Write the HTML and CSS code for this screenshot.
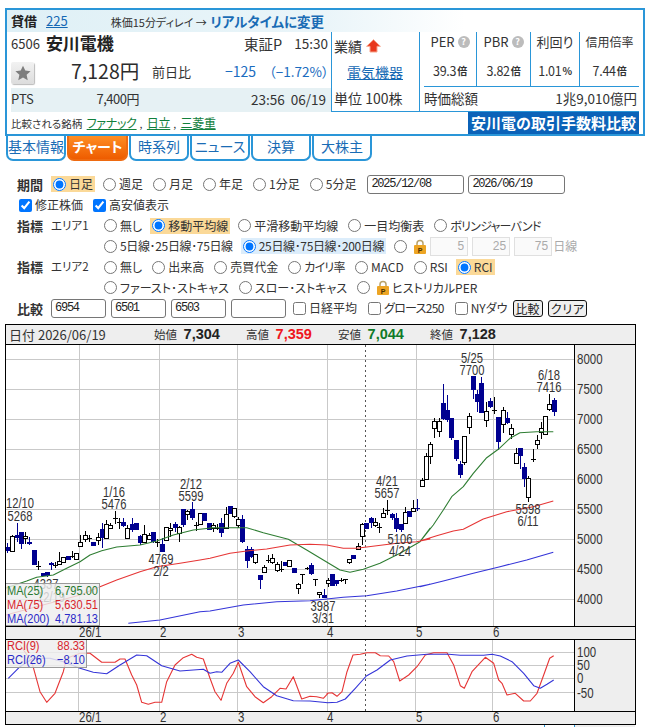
FILE: index.html
```html
<!DOCTYPE html>
<html lang="ja">
<head>
<meta charset="utf-8">
<title>安川電機 チャート</title>
<link rel="stylesheet" href="styles.css">
</head>
<body>
<div class="page">
  <section class="quote">
    <div class="q-top">
      <b class="q-margin">貸借</b><a class="q-nk" href="#">225</a>
      <span class="q-delay">株価15分ディレイ → <b>リアルタイムに変更</b></span>
    </div>
    <div class="q-main">
      <div class="q-left">
        <div class="q-name">
          <span class="code">6506</span><b class="name">安川電機</b>
          <span class="market">東証P</span><span class="time">15:30</span>
        </div>
        <div class="q-price">
          <button class="star" type="button" aria-label="登録"><svg width="16" height="16" viewBox="0 0 24 24"><path class="star-shape" d="M12 1l3.4 7.4 8 .9-6 5.4 1.7 8L12 18.700l-7.100 4 1.700-8-6-5.400 8-.9z"/></svg></button>
          <span class="price">7,128円</span>
          <span class="zenjitsu">前日比</span>
          <span class="chg">−125</span><span class="pct">（−1.72%）</span>
        </div>
        <div class="q-pts">
          <span class="pts">PTS</span><span class="pts-price">7,400円</span><span class="pts-time">23:56&nbsp; 06/19</span>
        </div>
      </div>
      <div class="q-mid">
        <div class="mid-row">業績 <svg class="up" width="15" height="14" viewBox="0 0 15 14"><path class="up-shape" d="M7.500 .7L14.400 7.300H11V13H4V7.300H.6z"/></svg></div>
        <div class="mid-row mid-link"><a href="#">電気機器</a></div>
        <div class="mid-row mid-unit">単位 100株</div>
      </div>
      <div class="q-right">
        <div class="metrics">
          <div class="m-cell">PER <span class="help">?</span></div>
          <div class="m-cell">PBR <span class="help">?</span></div>
          <div class="m-cell">利回り</div>
          <div class="m-cell m-small">信用倍率</div>
          <div class="m-cell m-val">39.3<small>倍</small></div>
          <div class="m-cell m-val">3.82<small>倍</small></div>
          <div class="m-cell m-val">1.01 <small>%</small></div>
          <div class="m-cell m-val">7.44<small>倍</small></div>
        </div>
        <div class="cap"><span>時価総額</span><span>1兆9,010億円</span></div>
      </div>
    </div>
    <div class="q-foot">
      <div class="peers">比較される銘柄 <a href="#">ファナック</a>, <a href="#">日立</a>, <a href="#">三菱重</a></div>
      <div class="banner">安川電の取引手数料比較</div>
    </div>
  </section>

  <nav class="tabs">
    <a class="tab" href="#">基本情報</a>
    <a class="tab tab-on" href="#">チャート</a>
    <a class="tab" href="#">時系列</a>
    <a class="tab" href="#">ニュース</a>
    <a class="tab" href="#">決算</a>
    <a class="tab" href="#">大株主</a>
  </nav>

  <form class="form">
    <div class="row">
      <b class="lab">期間</b>
      <label class="opt hl"><input type="radio" name="p" checked>日足</label>
      <label class="opt"><input type="radio" name="p">週足</label>
      <label class="opt"><input type="radio" name="p">月足</label>
      <label class="opt"><input type="radio" name="p">年足</label>
      <label class="opt"><input type="radio" name="p">1分足</label>
      <label class="opt"><input type="radio" name="p">5分足</label>
      <input class="date" type="text" value="2025/12/08">
      <input class="date date2" type="text" value="2026/06/19">
    </div>
    <div class="row row-checks">
      <label class="opt"><input type="checkbox" checked>修正株価</label>
      <label class="opt"><input type="checkbox" checked>高安値表示</label>
    </div>
    <div class="row">
      <b class="lab">指標</b><span class="area">エリア1</span>
      <label class="opt"><input type="radio" name="a1">無し</label>
      <label class="opt hl"><input type="radio" name="a1" checked>移動平均線</label>
      <label class="opt"><input type="radio" name="a1">平滑移動平均線</label>
      <label class="opt"><input type="radio" name="a1">一目均衡表</label>
      <label class="opt tight"><input type="radio" name="a1">ボリンジャーバンド</label>
    </div>
    <div class="row row-sub">
      <label class="opt tight-s"><input type="radio" name="ma">5日線･25日線･75日線</label>
      <label class="opt hl-blue tight-s"><input type="radio" name="ma" checked>25日線･75日線･200日線</label>
      <label class="opt"><input type="radio" name="ma"><svg class="lock" width="12" height="15" viewBox="0 0 12 15"><path class="lock-bow" d="M3 7V4.500a3 3 0 0 1 6 0V7"/><rect class="lock-body" y="6" width="12" height="9" rx="1"/><text class="lock-p" x="6" y="13.500">P</text></svg></label>
      <input class="ma-in" type="text" value="5" disabled>
      <input class="ma-in" type="text" value="25" disabled>
      <input class="ma-in" type="text" value="75" disabled>
      <span class="ma-unit">日線</span>
    </div>
    <div class="row">
      <b class="lab">指標</b><span class="area">エリア2</span>
      <label class="opt"><input type="radio" name="a2">無し</label>
      <label class="opt"><input type="radio" name="a2">出来高</label>
      <label class="opt"><input type="radio" name="a2">売買代金</label>
      <label class="opt tight"><input type="radio" name="a2">カイリ率</label>
      <label class="opt"><input type="radio" name="a2">MACD</label>
      <label class="opt"><input type="radio" name="a2">RSI</label>
      <label class="opt hl"><input type="radio" name="a2" checked>RCI</label>
    </div>
    <div class="row row-sub">
      <label class="opt"><input type="radio" name="a2">ファースト･ストキャス</label>
      <label class="opt"><input type="radio" name="a2">スロー･ストキャス</label>
      <label class="opt"><input type="radio" name="a2"><svg class="lock" width="12" height="15" viewBox="0 0 12 15"><path class="lock-bow" d="M3 7V4.500a3 3 0 0 1 6 0V7"/><rect class="lock-body" y="6" width="12" height="9" rx="1"/><text class="lock-p" x="6" y="13.500">P</text></svg>ヒストリカルPER</label>
    </div>
    <div class="row row-cmp">
      <b class="lab">比較</b>
      <input class="cmp" type="text" value="6954">
      <input class="cmp" type="text" value="6501">
      <input class="cmp" type="text" value="6503">
      <input class="cmp" type="text" value="">
      <label class="opt"><input type="checkbox">日経平均</label>
      <label class="opt tight"><input type="checkbox">グロース250</label>
      <label class="opt"><input type="checkbox">NYダウ</label>
      <button class="btn" type="button">比較</button>
      <button class="btn tight" type="button">クリア</button>
    </div>
  </form>

  <section class="chart">
    <div class="ohlc">
      <span class="o-date">日付 2026/06/19</span>
      <span class="o-item o-open"><i>始値</i> <b>7,304</b></span>
      <span class="o-item"><i>高値</i> <b class="red">7,359</b></span>
      <span class="o-item"><i>安値</i> <b class="green">7,044</b></span>
      <span class="o-item"><i>終値</i> <b>7,128</b></span>
    </div>
    <svg id="plot" class="plot" width="631" height="382" viewBox="5 345 631 382">
      <rect class="panel" x="575" y="345" width="60" height="281"/>
      <rect class="panel" x="5" y="627" width="630" height="12"/>
      <rect class="panel" x="5" y="712" width="630" height="12"/>
      <rect class="panel" x="575" y="640" width="60" height="71"/>
      <rect class="panel" x="575" y="725" width="60" height="2"/>
      <path class="grid" d="M5 359.500H574M5 389.500H574M5 419.500H574M5 449.500H574M5 479.500H574M5 509.500H574M5 539.500H574M5 569.500H574M5 599.500H574M79.500 345V626M159.500 345V626M237.500 345V626M327.500 345V626M416.500 345V626M493.500 345V626"/>
      <path class="grid" d="M5 652.500H574M5 665.500H574M5 678.500H574M5 692.500H574M78.500 639V711M159.500 639V711M237.500 639V711M327.500 639V711M415.500 639V711M492.500 639V711"/>
      <path class="dots" d="M365.500 345V626M365.500 639V711"/>
      <g id="candles"></g>
      <g id="lines"></g>
      <g class="lbl">
        <text x="20" y="508">12/10</text><text x="20" y="521">5268</text>
        <text x="114" y="497">1/16</text><text x="114" y="509">5476</text>
        <text x="191" y="489">2/12</text><text x="191" y="501">5599</text>
        <text x="161" y="564">4769</text><text x="161" y="576">2/2</text>
        <text x="46" y="589">4337</text><text x="51" y="602">12/19</text>
        <text x="323" y="611">3987</text><text x="323" y="623">3/31</text>
        <text x="387" y="486">4/21</text><text x="387" y="498">5657</text>
        <text x="400" y="544">5106</text><text x="400" y="556">4/24</text>
        <text x="472" y="363">5/25</text><text x="472" y="375">7700</text>
        <text x="549" y="380">6/18</text><text x="549" y="392">7416</text>
        <text x="528" y="514">5598</text><text x="528" y="526">6/11</text>
      </g>
      <g class="axis">
        <text x="577" y="364">8000</text><text x="577" y="394">7500</text><text x="577" y="424">7000</text>
        <text x="577" y="454">6500</text><text x="577" y="484">6000</text><text x="577" y="514">5500</text>
        <text x="577" y="544">5000</text><text x="577" y="574">4500</text><text x="577" y="604">4000</text>
        <text x="577" y="657">100</text><text x="577" y="670">50</text><text x="577" y="683">0</text><text x="577" y="698">-50</text>
        <text x="79" y="637">26/1</text><text x="160" y="637">2</text><text x="238" y="637">3</text><text x="327" y="637">4</text><text x="416" y="637">5</text><text x="493" y="637">6</text>
        <text x="79" y="722">26/1</text><text x="160" y="722">2</text><text x="238" y="722">3</text><text x="327" y="722">4</text><text x="416" y="722">5</text><text x="493" y="722">6</text>
      </g>
      <rect class="legend" x="5.500" y="583.500" width="94" height="42"/>
      <g class="leg-t">
        <text class="c-g" x="7" y="595">MA(25)</text><text class="c-g end" x="98" y="595">6,795.00</text>
        <text class="c-r" x="7" y="609">MA(75)</text><text class="c-r end" x="98" y="609">5,630.51</text>
        <text class="c-b" x="7" y="623">MA(200)</text><text class="c-b end" x="98" y="623">4,781.13</text>
      </g>
      <rect class="legend" x="5.500" y="639.500" width="81" height="28"/>
      <g class="leg-t">
        <text class="c-r" x="7" y="650">RCI(9)</text><text class="c-r end" x="85" y="650">88.33</text>
        <text class="c-b" x="7" y="664">RCI(26)</text><text class="c-b end" x="85" y="664">−8.10</text>
      </g>
      <path class="frame" d="M5.500 345V724M635.500 345V724M574.500 345V626M574.500 639V711M5 626.500H636M5 639.500H636M5 711.500H636M5 724.500H636"/>
      <path class="tick" d="M544.500 725V727M574.500 725V727"/>
    </svg>
  </section>
</div>
<script src="chart.js"></script>
</body>
</html>
```

FILE: styles.css
```css
* { box-sizing: border-box; }
html, body { margin: 0; padding: 0; background: #fff; }
body {
  font-family: "Noto Sans CJK JP", "Noto Sans", sans-serif;
  font-size: 12px;
  line-height: 1.2;
  color: #333;
  font-feature-settings: "palt";
  overflow: hidden;
}
.page { width: 657px; height: 727px; padding: 8px 0 0 5px; overflow: hidden; }
a { color: #1468b4; }

/* quote box */
.quote { width: 640px; height: 128px; border: 2px solid #2a96d8; padding: 0 4px 0 4px; background: #fff; position: relative; z-index: 1; }
.q-top { height: 22px; margin: 0 -4px; padding: 0 0 0 4px; display: flex; align-items: center; background: linear-gradient(90deg, #dff0f6, #eaf5f9 50%, #fff 72%); }
.q-margin { font-size: 13px; color: #222; font-weight: 700; }
.q-nk { font-size: 13px; margin-left: 9px; }
.q-delay { margin-left: 43px; font-size: 11px; }
.q-delay b { font-size: 13.500px; color: #1a6cb5; margin-left: 1px; }
.q-main { display: flex; height: 80px; border-bottom: 1px solid #2a96d8; }
.q-left { width: 320px; }
.q-name { height: 28px; padding-bottom: 5px; display: flex; align-items: center; }
.code { font-size: 13px; }
.name { font-size: 17px; margin-left: 6px; color: #222; }
.market { font-size: 14.500px; margin-left: auto; }
.time { font-size: 13.500px; margin-left: 12px; margin-right: 3px; }
.q-price { height: 28px; display: flex; align-items: center; }
.star { width: 23px; height: 22px; padding: 0; border: 0; border-radius: 2px; background: linear-gradient(#f2f2f2, #dcdcdc); box-shadow: 1px 1px 1px #bbb; display: flex; align-items: center; justify-content: center; margin-top: -2px; }
.star-shape { fill: #7d7d7d; }
.price { font-size: 19.500px; margin-left: 37px; width: 81px; color: #2c2c2c; padding-bottom: 6px; }
.zenjitsu { font-size: 13px; padding-bottom: 5px; }
.chg { font-size: 14px; color: #1a6cc0; margin-left: 34px; padding-bottom: 5px; }
.pct { font-size: 13.500px; margin-left: 13px; color: #1a6cc0; padding-bottom: 5px; }
.q-pts { height: 24px; background: #e6f1f4; display: flex; align-items: center; font-size: 13px; padding-bottom: 2px; }
.pts { width: 59px; }
.pts-price { width: 69px; text-align: right; letter-spacing: -.5px; }
.pts-time { margin-left: auto; margin-right: 5px; font-size: 13.500px; }
.q-mid { width: 89px; border-left: 1px solid #2a96d8; border-right: 1px solid #2a96d8; padding-left: 2px; }
.mid-row { height: 28px; display: flex; align-items: center; font-size: 14px; gap: 4px; }
.mid-link { justify-content: center; padding: 0 3px 3px 0; }
.mid-unit { height: 24px; font-size: 14px; padding-bottom: 3px; }
.up { display: block; }
.up-shape { fill: #e8381c; stroke: #f7a58c; stroke-width: 1; }
.q-right { width: 219px; padding-left: 4px; }
.metrics { display: grid; grid-template-columns: 52px 54px 49px 60px; grid-template-rows: 28px 27px; border-bottom: 1px solid #2a96d8; height: 55px; }
.m-cell { display: flex; align-items: center; justify-content: center; gap: 3px; font-size: 13px; border-left: 1px solid #2a96d8; padding-bottom: 8px; }
.m-small { font-size: 12px; }
.m-cell:nth-child(4n+1) { border-left: 0; }
.m-val { gap: 0; font-size: 12.500px; letter-spacing: -.3px; padding-bottom: 6px; }
.m-val small { font-size: 10px; margin-left: 1px; font-weight: 700; }
.help { width: 12px; height: 12px; border-radius: 50%; background: #bcbcbc; color: #fff; font-size: 9px; font-weight: 700; line-height: 12px; text-align: center; }
.cap { height: 24px; display: flex; justify-content: space-between; align-items: center; font-size: 13.500px; padding: 0 2px 2px 0; }
.q-foot { height: 22px; display: flex; align-items: center; justify-content: space-between; }
.peers { font-size: 10.500px; }
.peers a { font-size: 12px; color: #12803c; margin: 0 3px 0 2px; letter-spacing: -.3px; }
.banner { width: 171px; height: 22px; background: #0b62b8; color: #fff; font-size: 15px; font-weight: 700; line-height: 22px; text-align: center; white-space: nowrap; }

/* tabs */
.tabs { display: flex; gap: 1px; margin: -1px 0 0 1px; height: 26px; align-items: stretch; }
.tab { width: 60px; border: 2px solid #2a96d8; border-top: 0; border-radius: 0 0 7px 7px; color: #1a6cb5; font-size: 14px; text-align: center; line-height: 22px; text-decoration: none; background: #fff; }
.tab-on { width: 61px; background: linear-gradient(#ff8f24, #ee5c00); border-color: #ee6a10; color: #fff; font-weight: 700; }

/* form */
.form { margin-top: 13px; padding-left: 12px; }
.row { height: 20.700px; display: flex; align-items: center; gap: 10px; white-space: nowrap; }
.lab { width: 24px; font-size: 13px; color: #333; }
.opt { display: inline-flex; align-items: center; gap: 3px; height: 16px; font-size: 12px; color: #333; }
.opt input { margin: 0; width: 13px; height: 13px; }
.hl { background: #fbd998; padding: 0 2px; margin: 0 -2px; }
.lab + .hl { margin-left: 0; }
.hl-blue { background: #dcedfb; padding: 0 2px; margin: 0 -2px; }
.tight { letter-spacing: -.7px; }
.tight-s { letter-spacing: -.35px; }
.area { width: 43px; font-size: 11.500px; }
.row-sub { padding-left: 87px; }
.row-checks { padding-left: 2px; }
.row-cmp { gap: 5px; }
.row-cmp .lab { margin-right: 5px; }
.date { width: 97px; height: 19px; margin-left: 1px; padding: 0 3px; border: 1px solid #767676; border-radius: 3px; font: 12px "Liberation Mono", monospace; letter-spacing: -1.250px; color: #222; }
.date2 { margin-left: -6px; }
.cmp { width: 55px; height: 19px; padding: 0 3px; border: 1px solid #767676; border-radius: 3px; font: 12px "Liberation Mono", monospace; letter-spacing: -1.250px; color: #222; }
.row-cmp .opt { margin-left: 6px; }
.row-cmp .cmp + .opt { margin-left: 2px; }
.btn { height: 17px; padding: 0 2px; border: 1px solid #111; border-radius: 3px; background: #efefef; font: 12px/15px "Noto Sans CJK JP", sans-serif; color: #222; }
.btn.tight { letter-spacing: -1px; }
.ma-in { width: 38px; height: 19px; padding: 0 3px 0 0; border: 1px solid #e0e0e0; background: #fafafa; text-align: right; font-size: 12px; color: #aaa; margin-left: -6px; font-family: "Liberation Sans", sans-serif; }
.ma-unit { font-size: 12px; color: #aaa; margin-left: -9px; }
.lock { display: block; margin-left: 4px; }
.lock-bow { fill: none; stroke: #b9a26a; stroke-width: 1.500; }
.lock-body { fill: #eda524; }
.lock-p { font: 700 7px "Liberation Sans", sans-serif; text-anchor: middle; fill: #4a3000; }

/* chart */
.chart { margin-top: 5px; width: 631px; }
.ohlc { height: 21px; border: 1px solid #000; background: #eee; display: flex; align-items: center; padding-left: 3px; white-space: nowrap; color: #333; }
.o-date { width: 145px; font-size: 13px; }
.o-item { width: 92px; font-size: 11.500px; }
.o-item i { font-style: normal; margin-right: 4px; }
.o-item b { font: 700 14.500px "Liberation Sans", sans-serif; color: #222; }
.o-item b.red { color: #ef1620; }
.o-item b.green { color: #0f7a28; }
.plot { display: block; }
.panel { fill: #eee; }
.grid { fill: none; stroke: #c9c9c9; stroke-width: 1; }
.dots { fill: none; stroke: #555; stroke-width: 1; stroke-dasharray: 2 3; }
.frame { fill: none; stroke: #000; stroke-width: 1; }
.tick { fill: none; stroke: #2a96d8; stroke-width: 1; }
.wick-h { stroke: #000; stroke-width: 1; shape-rendering: crispEdges; }
.wick-f { stroke: #000090; stroke-width: 1; shape-rendering: crispEdges; }
.body-h { fill: #fff; stroke: #000; stroke-width: 1; shape-rendering: crispEdges; }
.body-f { fill: #000090; shape-rendering: crispEdges; }
.ln { fill: none; stroke-width: 1.100; stroke-linejoin: round; }
.ln-g { stroke: #2e7d32; }
.ln-r { stroke: #e63535; }
.ln-b { stroke: #3434d8; }
.lbl text { font: 14px "Liberation Sans", sans-serif; fill: #333; text-anchor: middle; transform-box: fill-box; transform-origin: center; transform: scaleX(.8); }
.axis text { font: 14px "Liberation Sans", sans-serif; fill: #333; transform-box: fill-box; transform-origin: left; transform: scaleX(.82); }
.legend { fill: #eee; fill-opacity: .82; stroke: #9a9a9a; stroke-width: 1; }
.leg-t text { font: 13.500px "Liberation Sans", sans-serif; transform-box: fill-box; transform-origin: left; transform: scaleX(.82); }
.leg-t .end { text-anchor: end; transform-origin: right; }
.c-g { fill: #2a7a32; }
.c-r { fill: #d8242c; }
.c-b { fill: #2a2ac8; }
```

FILE: chart.js
```js
// Candles are [x, wickTop, wickBottom, bodyTop, bodyBottom, filled] in 3x panel units.
var NS = "http://www.w3.org/2000/svg";
var TOP = 345;
var candleSets = [
  [0, [[22,595,625,605,617,1],[37,570,617,573,617,0],[50,533,590,570,580,1],[63,560,612,562,597,1],[75,560,597,572,580,0],[88,576,600,590,598,1],[102,615,660,615,660,1],[115,648,675,663,663,0],[128,685,693,685,693,1],[140,680,695,682,693,1],[153,650,675,655,660,1],[165,652,670,660,660,0],[178,620,656,648,656,0],[190,637,652,637,652,0],[203,632,645,632,645,1],[215,618,640,632,632,0],[228,625,643,625,643,0],[241,570,602,590,602,0],[254,558,590,570,582,0],[267,570,590,580,580,0],[280,590,602,590,602,1],[293,565,600,577,584,0],[306,535,610,553,580,1],[318,525,580,538,580,0],[331,535,552,541,550,0],[344,497,538,520,520,0],[356,520,553,530,530,0],[369,518,545,532,542,1],[382,540,582,550,578,0],[395,518,560,538,555,1],[408,535,555,535,555,1],[421,570,600,573,593,1],[433,540,595,566,592,0],[446,565,585,570,582,0],[459,560,595,562,592,1],[472,582,605,592,592,0],[485,580,622,597,622,1],[498,545,585,545,585,0],[511,535,575,548,556,0],[524,530,560,538,548,1],[537,542,590,545,565,0],[550,493,545,493,540,1],[562,495,525,498,508,0],[575,472,525,493,518,1],[588,530,558,541,541,0],[600,505,538,505,538,0],[612,505,528,505,528,1]]],
  [210, [[-3,533,555,533,555,1],[8,535,560,540,548,0],[20,538,556,548,548,0],[33,520,575,535,565,1],[47,485,548,508,548,0],[60,482,508,482,508,1],[72,488,520,488,512,0],[85,515,550,523,540,0],[97,510,595,522,590,1],[110,603,670,612,648,1],[122,605,640,613,635,1],[136,628,658,628,650,0],[150,690,733,690,704,1],[162,660,682,667,680,0],[175,630,655,645,645,0],[187,628,658,640,650,0],[200,650,682,658,674,0],[212,648,682,672,672,0],[225,652,663,652,663,1],[238,644,664,644,664,0],[252,668,683,668,683,1],[264,715,748,718,728,0],[276,688,718,688,688,0],[290,665,675,670,670,0],[303,655,690,660,688,1],[316,702,724,702,702,0],[328,740,760,740,746,0],[342,733,760,750,760,1],[354,700,725,704,714,0],[366,686,724,686,724,1],[379,706,724,706,718,1],[392,700,710,704,704,0],[404,702,718,702,702,0],[417,643,656,643,650,0],[430,630,642,630,642,1],[444,595,615,602,612,0],[457,535,600,538,574,0],[468,533,553,533,553,1],[482,516,548,520,533,1],[495,518,545,530,541,0],[508,535,563,545,545,0],[519,490,515,505,515,0],[532,465,510,494,494,0],[546,505,525,508,520,1],[558,505,560,518,553,1],[572,538,560,538,555,1],[585,485,537,500,535,0],[597,497,515,497,515,1],[609,465,497,488,497,0],[622,463,498,488,488,1]]],
  [420, [[5,400,422,405,422,0],[18,325,405,333,403,0],[30,290,358,298,332,0],[43,218,278,227,248,0],[56,218,275,227,257,0],[69,118,225,175,222,1],[81,150,230,196,225,1],[94,218,285,220,278,1],[107,285,348,285,343,1],[120,348,398,358,390,1],[132,274,360,274,352,0],[146,205,268,212,247,0],[159,93,162,93,134,1],[171,135,200,148,170,1],[184,97,205,115,203,1],[197,172,247,197,226,0],[210,160,190,168,186,1],[222,155,208,194,194,0],[235,215,315,217,290,1],[248,185,265,194,236,0],[261,200,237,220,233,1],[273,238,283,248,268,0],[287,310,358,325,355,0],[300,308,372,308,332,1],[312,355,425,367,403,1],[325,393,472,398,457,0],[338,312,350,343,343,0],[351,270,313,284,296,0],[364,232,283,250,262,0],[375,212,270,214,268,0],[388,146,198,176,192,0],[401,158,214,166,200,1]]]
];
var lineSets = [
  ["ln-g", 345, [[[[0,735],[80,708],[110,697],[160,690],[200,670],[240,650],[270,630],[305,617],[350,606],[420,600],[470,588],[520,570],[580,555],[640,548]], 0],
    [[[0,548],[50,548],[110,548],[160,563],[235,583],[290,615],[340,645],[390,675],[420,682],[460,673],[510,655],[570,625],[630,590],[660,550]], 210],
    [[[0,590],[40,540],[70,495],[95,455],[130,425],[160,385],[200,338],[235,313],[270,280],[300,263],[350,260],[400,260]], 420]]],
  ["ln-r", 345, [[[[18,810],[165,770],[240,750],[300,725],[350,705],[420,680],[470,665],[540,655],[600,645],[630,640]], 0],
    [[[0,640],[60,625],[110,618],[170,612],[240,600],[300,598],[350,600],[400,610],[440,610],[500,602],[560,595],[620,590],[660,582]], 210],
    [[[0,588],[50,572],[100,558],[130,553],[190,522],[260,500],[340,485],[400,468]], 420]]],
  ["ln-b", 345, [[[[385,835],[480,825],[600,800],[630,798]], 0],
    [[[0,798],[100,780],[200,770],[300,767],[400,757],[470,752],[560,738],[660,718]], 210],
    [[[0,725],[70,708],[160,685],[240,665],[320,645],[400,622]], 420]]],
  ["ln-r", 625, [[[[60,60],[95,110],[120,200],[140,232],[165,205],[190,140],[200,100],[240,85],[270,85],[305,112],[345,112],[360,102],[375,102],[395,150],[410,180],[425,232],[445,238],[465,232],[485,232],[500,170],[525,120],[550,98],[575,88],[590,97],[610,102],[630,160],[645,200],[663,226],[680,175],[700,145],[715,112],[740,185],[765,215],[790,233],[815,215],[840,190],[858,192],[880,155],[905,222],[930,214],[950,215],[970,220],[984,205]], 0],
    [[[0,205],[15,203],[30,214],[45,200],[60,140],[78,90],[100,88],[120,83],[145,83],[160,92],[185,93],[200,110],[218,168],[245,150],[270,125],[295,90],[320,83],[360,83],[380,120],[400,182],[412,190],[435,140],[475,97],[500,115],[515,165],[525,175],[540,210],[565,205],[590,228],[610,228],[630,205],[650,150],[668,100],[680,92]], 327]]],
  ["ln-b", 625, [[[[25,160],[60,125],[100,100],[150,100],[190,110],[240,130],[280,142],[320,146],[360,120],[410,90],[440,92],[485,122],[540,138],[610,133],[630,145],[650,140],[665,142],[690,115],[715,105],[750,140],[790,185],[830,212],[880,227],[930,228],[984,233]], 0],
    [[[0,233],[30,232],[55,222],[85,190],[118,153],[150,135],[190,105],[240,93],[300,88],[365,88],[400,91],[470,91],[495,88],[520,93],[555,110],[590,145],[620,182],[640,190],[660,178],[680,165]], 327]]]
];

function make(tag, attrs) {
  var el = document.createElementNS(NS, tag);
  for (var k in attrs) el.setAttribute(k, attrs[k]);
  return el;
}

var candles = document.getElementById("candles");
candleSets.forEach(function (set) {
  var ox = set[0];
  set[1].forEach(function (c) {
    var x = Math.round(ox + c[0] / 3) + 0.5;
    var y = function (z) { return Math.round(TOP + z / 3); };
    var filled = c[5] === 1;
    var wick = filled ? "wick-f" : "wick-h";
    candles.appendChild(make("line", { x1: x, x2: x, y1: y(c[1]), y2: y(c[2]), "class": wick }));
    if (c[3] === c[4]) {
      candles.appendChild(make("line", { x1: x - 2.5, x2: x + 2.5, y1: y(c[3]) + 0.5, y2: y(c[3]) + 0.5, "class": wick }));
    } else if (filled) {
      candles.appendChild(make("rect", { x: x - 2.5, y: y(c[3]), width: 4.5, height: y(c[4]) - y(c[3]), "class": "body-f" }));
    } else {
      candles.appendChild(make("rect", { x: x - 2, y: y(c[3]) + 0.5, width: 4, height: y(c[4]) - y(c[3]), "class": "body-h" }));
    }
  });
});

var lines = document.getElementById("lines");
lineSets.forEach(function (s) {
  var pts = [];
  s[2].forEach(function (seg) {
    seg[0].forEach(function (p) {
      pts.push((seg[1] + p[0] / 3).toFixed(1) + "," + (s[1] + p[1] / 3).toFixed(1));
    });
  });
  lines.appendChild(make("polyline", { points: pts.join(" "), "class": "ln " + s[0] }));
});
```
